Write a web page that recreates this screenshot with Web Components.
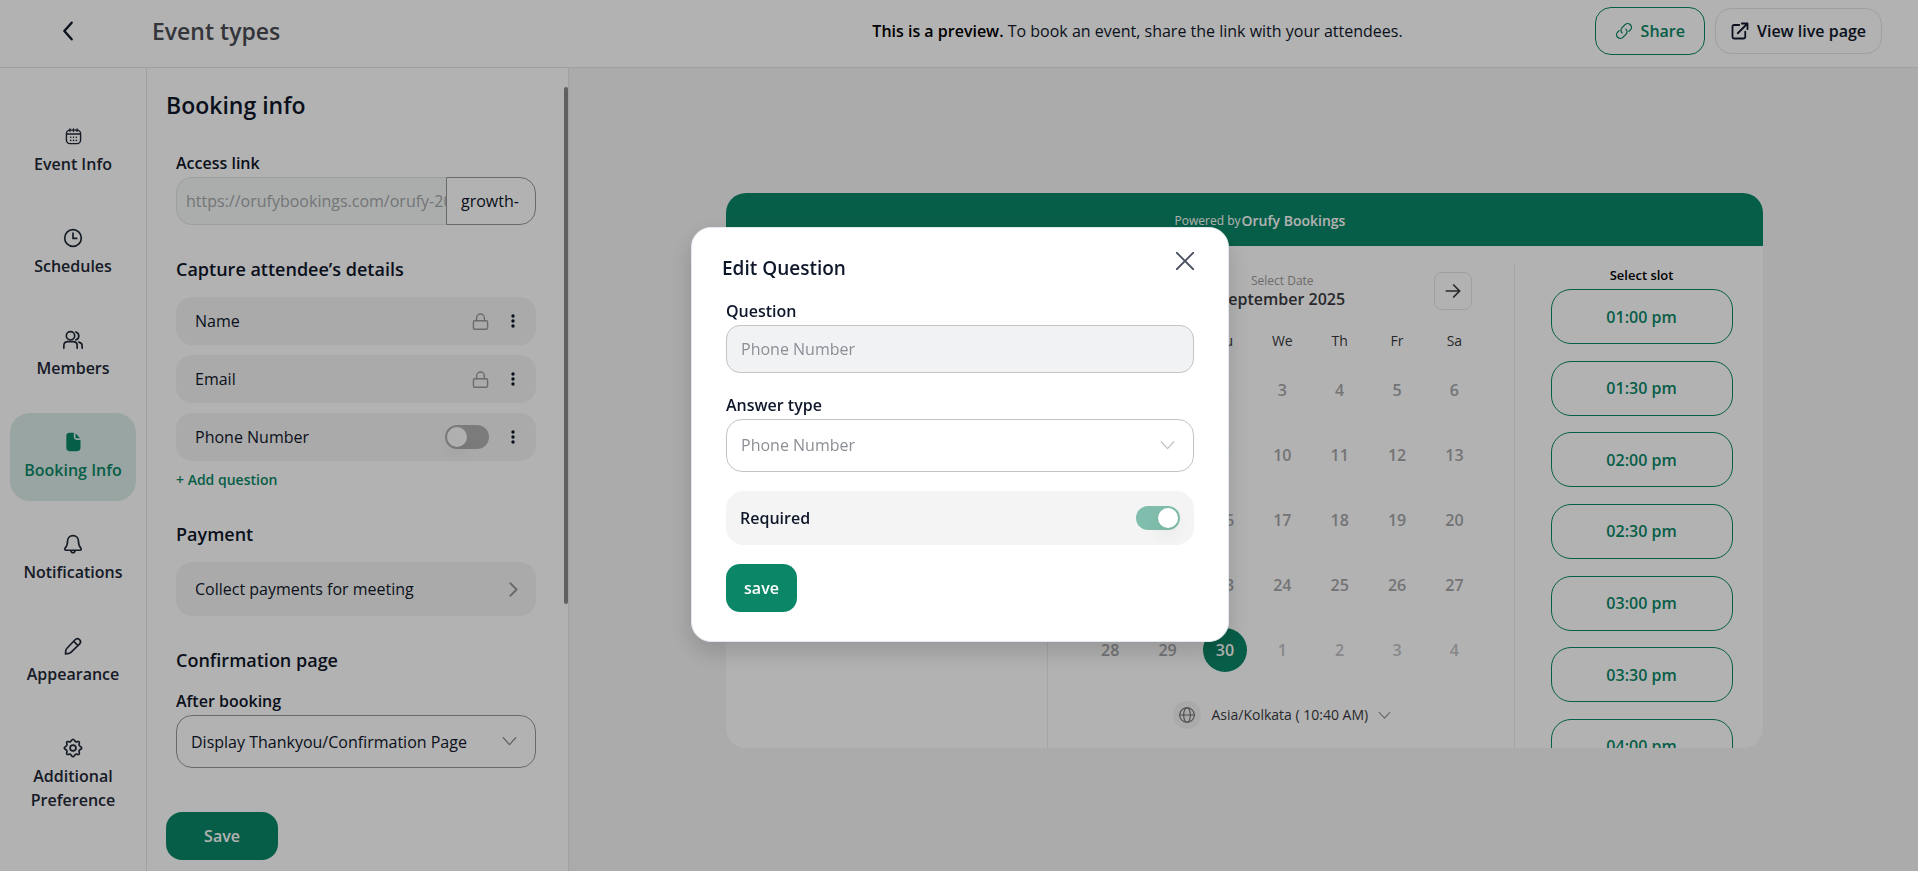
<!DOCTYPE html>
<html lang="en">
<head>
<meta charset="utf-8">
<title>Event types</title>
<style>
    :root {
        --green: #0b8767;
        --ink: #0f172a;
        --line: #e3e5ec;
        --soft: #f4f4f4;
    }
    body {
        margin: 0;
        font: 16px/24px "Open Sans", "Noto Sans", sans-serif;
        color: var(--ink);
        background: #fff;
    }
</style>
</head>
<body>

<booking-app></booking-app>

<script>
// shared by every shadow root
const base = `
    * { box-sizing: border-box; }
    button, input, select { font: inherit; color: inherit; margin: 0; }
    button { padding: 0; border: 0; background: none; cursor: pointer; }
    h1, h2, h3, p { margin: 0; }
`;

const icons = {
    back: '<path d="M16 3 8 12l8 9" stroke-width="2.6"/>',
    calendar: '<rect x="2" y="3" width="20" height="19" rx="5"/><path d="M2.500 8.500h19M7 1.500v3M12 1.500v3M17 1.500v3"/><path d="M8 13h.1M12 13h.1M16 13h.1M8 17.500h.1M12 17.500h.1M16 17.500h.1" stroke-width="2.2"/>',
    clock: '<circle cx="12" cy="12" r="10"/><path d="M12 6v6.500h4.500"/>',
    members: '<circle cx="9" cy="7" r="5"/><path d="M1 22v-3c0-3 2-5 5-5h6c3 0 5 2 5 5v3M15.500 2.300a5 5 0 0 1 0 9.500M19 14.500c2.500.6 4 2.300 4 4.500v3"/>',
    file: '<path d="M8 1h5v5c0 2 1.500 3.500 3.500 3.500H21V19a4 4 0 0 1-4 4H8a4 4 0 0 1-4-4V5a4 4 0 0 1 4-4z" fill="currentColor" stroke="none"/><path d="M15 1.500V6c0 1 .5 1.500 1.500 1.500H20.500z" fill="currentColor" stroke="none"/>',
    bell: '<path d="M12 2c-4 0-6.500 3-6.500 6.500 0 5-1.500 7-3 8.500-.8 1-.3 2.500 1 2.500h17c1.300 0 1.800-1.500 1-2.500-1.500-1.500-3-3.500-3-8.500C18.500 5 16 2 12 2zM9.500 20c.2 1.500 1 2.500 2.500 2.500s2.300-1 2.500-2.500"/>',
    pencil: '<path d="m14.500 4.500-10 10.500c-1 1-1.500 3-1.500 6.500 3.500 0 5.300-.6 6.500-1.800L20 9.500a3.600 3.600 0 0 0-5.500-5zM13 6.500l5 5"/>',
    gear: '<circle cx="12" cy="12" r="3.500"/><path d="M12 1.500c1.500 0 2 2.500 3.200 3 1.300.5 3.300-1 4.200 0s-.5 3-.1 4.200c.5 1.300 3.200 1.800 3.200 3.300s-2.700 2-3.200 3.300c-.4 1.200 1 3.200.1 4.200s-2.900-.5-4.200 0c-1.200.5-1.700 3-3.200 3s-2-2.500-3.200-3c-1.300-.5-3.300 1-4.200 0s.5-3 .1-4.200C4.200 14 1.500 13.500 1.500 12s2.700-2 3.200-3.300c.4-1.200-1-3.200-.1-4.200s2.900.5 4.200 0c1.200-.5 1.700-3 3.200-3z"/>',
    link: '<path d="M9.500 14.500a5 5 0 0 1 0-7l4-4a4.950 4.950 0 0 1 7 7l-2 2M14.500 9.500a5 5 0 0 1 0 7l-4 4a4.950 4.950 0 0 1-7-7l2-2"/>',
    external: '<path d="M11 4H4a2 2 0 0 0-2 2v14a2 2 0 0 0 2 2h13a2 2 0 0 0 2-2v-7M9 15 22 2M14.500 2H22v7.500" stroke-width="2.400"/>',
    lock: '<rect x="2" y="11" width="20" height="12" rx="2"/><path d="M6.500 11V7a5.500 5.500 0 0 1 11 0v4"/>',
    dots: '<g fill="currentColor" stroke="none"><circle cx="12" cy="3.500" r="2.900"/><circle cx="12" cy="12" r="2.900"/><circle cx="12" cy="20.500" r="2.900"/></g>',
    right: '<path d="m7 2 10 10L7 22"/>',
    down: '<path d="m2 6 10 11L22 6"/>',
    arrow: '<path d="M2 12h19M13 3l9 9-9 9"/>',
    close: '<path d="m1 1 22 22M23 1 1 23"/>',
    globe: '<circle cx="12" cy="12" r="11"/><ellipse cx="12" cy="12" rx="5" ry="11"/><path d="M1 12h22"/>'
};

class AppIcon extends HTMLElement {
    connectedCallback() {
        const size = this.getAttribute('size') || 18;
        const weight = this.getAttribute('weight') || 2;
        this.attachShadow({ mode: 'open' }).innerHTML = `
            <style>
                :host { display: inline-flex; flex: none; }
                svg { display: block; }
            </style>
            <svg width="${size}" height="${size}" viewBox="0 0 24 24" fill="none" stroke="currentColor"
                stroke-width="${weight}" stroke-linecap="round" stroke-linejoin="round" aria-hidden="true">
                ${icons[this.getAttribute('name')]}
            </svg>
        `;
    }
}
customElements.define('app-icon', AppIcon);


class AppHeader extends HTMLElement {
    constructor() {
        super();
        this.attachShadow({ mode: 'open' }).innerHTML = `
            <style>
                ${base}
                :host {
                    display: flex;
                    align-items: center;
                    padding: 7px 36px 12px 0;
                    border-bottom: 1px solid var(--line);
                }
                .back { width: 136px; height: 40px; display: flex; align-items: center; justify-content: center; }
                h1 { margin-left: 16px; font-size: 23px; line-height: 32px; font-weight: 600; color: #4b4d55; }
                p { margin: 0 192px 0 auto; }
                b { font-weight: 600; color: #000; }
                .share, a {
                    display: flex;
                    align-items: center;
                    gap: 8px;
                    border-radius: 16px;
                    font-weight: 600;
                    color: var(--ink);
                    text-decoration: none;
                }
                .share { height: 48px; padding: 0 19px; border: 1px solid var(--green); color: var(--green); }
                a { height: 46px; margin-left: 10px; padding: 0 15px; border: 1px solid var(--line); }
            </style>
            <button class="back" aria-label="Back"><app-icon name="back" size="22"></app-icon></button>
            <h1>Event types</h1>
            <p><b>This is a preview.</b> To book an event, share the link with your attendees.</p>
            <button class="share"><app-icon name="link" weight="1.8"></app-icon>Share</button>
            <a href="#"><app-icon name="external"></app-icon>View live page</a>
        `;
    }
}
customElements.define('app-header', AppHeader);


class NavItem extends HTMLElement {
    connectedCallback() {
        this.attachShadow({ mode: 'open' }).innerHTML = `
            <style>
                ${base}
                :host { display: block; }
                a {
                    display: flex;
                    flex-direction: column;
                    align-items: center;
                    gap: 6px;
                    padding: 19px 4px;
                    border-radius: 20px;
                    font-weight: 600;
                    color: #1f2937;
                    text-align: center;
                    text-decoration: none;
                }
                :host([active]) a { background: #dcede9; color: var(--green); }
                span { height: 20px; display: flex; align-items: center; }
            </style>
            <a href="#">
                <span><app-icon name="${this.getAttribute('icon')}" size="${this.getAttribute('size') || 20}"></app-icon></span>
                <slot></slot>
            </a>
        `;
    }
}
customElements.define('nav-item', NavItem);


class SideNav extends HTMLElement {
    constructor() {
        super();
        this.attachShadow({ mode: 'open' }).innerHTML = `
            <style>
                ${base}
                :host { display: block; flex: none; width: 147px; border-right: 1px solid var(--line); }
                nav { display: flex; flex-direction: column; gap: 14px; padding: 39px 10px 0; }
            </style>
            <nav>
                <nav-item icon="calendar" size="17">Event Info</nav-item>
                <nav-item icon="clock">Schedules</nav-item>
                <nav-item icon="members">Members</nav-item>
                <nav-item icon="file" active>Booking Info</nav-item>
                <nav-item icon="bell">Notifications</nav-item>
                <nav-item icon="pencil">Appearance</nav-item>
                <nav-item icon="gear">Additional Preference</nav-item>
            </nav>
        `;
    }
}
customElements.define('side-nav', SideNav);


class ToggleSwitch extends HTMLElement {
    connectedCallback() {
        const checked = this.hasAttribute('checked') ? 'checked' : '';
        this.attachShadow({ mode: 'open' }).innerHTML = `
            <style>
                ${base}
                :host { display: flex; flex: none; }
                input {
                    appearance: none;
                    display: flex;
                    align-items: center;
                    width: 44px;
                    height: 24px;
                    padding: 2px;
                    border-radius: 12px;
                    background: #b1b1b1;
                }
                input::before {
                    content: "";
                    width: 20px;
                    height: 20px;
                    border-radius: 50%;
                    background: #fcfcfc;
                    box-shadow: 0 8px 16px rgba(0, 0, 0, .06);
                }
                input:checked { justify-content: flex-end; background: #80bdac; }
                input:checked::before { background: #fff; }
            </style>
            <input type="checkbox" role="switch" aria-label="${this.getAttribute('label')}" ${checked}>
        `;
    }
}
customElements.define('toggle-switch', ToggleSwitch);


class QuestionRow extends HTMLElement {
    connectedCallback() {
        this.attachShadow({ mode: 'open' }).innerHTML = `
            <style>
                ${base}
                :host {
                    display: flex;
                    align-items: center;
                    gap: 16px;
                    height: 48px;
                    padding: 0 15px 0 19px;
                    border-radius: 16px;
                    background: var(--soft);
                }
                .name { flex: 1; }
                ::slotted(app-icon) { color: #9b9b9b; }
                button { width: 16px; height: 24px; display: flex; align-items: center; justify-content: center; }
            </style>
            <span class="name">${this.getAttribute('name')}</span>
            <slot></slot>
            <button aria-label="Options"><app-icon name="dots" size="14"></app-icon></button>
        `;
    }
}
customElements.define('question-row', QuestionRow);


class SelectField extends HTMLElement {
    connectedCallback() {
        this.attachShadow({ mode: 'open' }).innerHTML = `
            <style>
                ${base}
                :host { display: block; }
                label { display: block; margin-bottom: 1px; line-height: 26px; font-weight: 600; }
                .box { display: grid; align-items: center; }
                select, app-icon { grid-area: 1 / 1; }
                select {
                    appearance: none;
                    width: 100%;
                    height: 53px;
                    padding: 0 48px 0 14px;
                    border: 1px solid #999;
                    border-radius: 16px;
                    background: #fff;
                    opacity: 1;
                }
                app-icon { justify-self: end; margin-right: 19px; color: #8c8c8c; pointer-events: none; }
                select:disabled { border-color: #c4c4c4; color: #8b8e95; }
                select:disabled + app-icon { color: #c0c0c0; }
            </style>
            <label for="field">${this.getAttribute('label')}</label>
            <div class="box">
                <select id="field" ${this.hasAttribute('disabled') ? 'disabled' : ''}>
                    <option>${this.getAttribute('value')}</option>
                </select>
                <app-icon name="down" size="15"></app-icon>
            </div>
        `;
    }
}
customElements.define('select-field', SelectField);


class BookingPanel extends HTMLElement {
    constructor() {
        super();
        this.attachShadow({ mode: 'open' }).innerHTML = `
            <style>
                ${base}
                :host { display: flex; flex: none; width: 422px; border-right: 1px solid var(--line); }
                .content { flex: 1; display: flex; flex-direction: column; padding: 21px 13px 11px 19px; }
                h1 { margin-bottom: 29px; font-size: 23px; line-height: 32px; font-weight: 600; }
                .form { width: 360px; margin-left: 10px; }
                h2 { margin: 30px 0 14px; font-size: 18px; line-height: 28px; font-weight: 600; }
                label { display: block; margin-bottom: 1px; line-height: 26px; font-weight: 600; }
                .link { display: flex; }
                .link input { min-width: 0; height: 48px; border: 1px solid #999; background: #fff; }
                .link .base {
                    flex: 1;
                    padding: 0 0 0 9px;
                    border-color: var(--line);
                    border-right: 0;
                    border-radius: 16px 0 0 16px;
                    background: #f5f8f6;
                    color: #a5a8ad;
                }
                .link .slug { width: 90px; padding: 0 14px; border-radius: 0 16px 16px 0; }
                .rows { display: flex; flex-direction: column; gap: 10px; }
                .add { display: block; margin-top: 9px; font-size: 14px; line-height: 20px; font-weight: 600; color: var(--green); }
                .collect {
                    display: flex;
                    align-items: center;
                    justify-content: space-between;
                    width: 100%;
                    height: 54px;
                    padding: 0 15px 0 19px;
                    border-radius: 16px;
                    background: var(--soft);
                }
                .collect app-icon { color: #999; }
                .save {
                    align-self: flex-start;
                    width: 112px;
                    height: 48px;
                    margin-top: auto;
                    border-radius: 16px;
                    background: var(--green);
                    color: #fff;
                    font-weight: 600;
                }
                .rail { width: 4px; padding-top: 19px; }
                .thumb { height: 66%; border-radius: 2px; background: #8a8a8a; }
            </style>
            <div class="content">
                <h1>Booking info</h1>
                <div class="form">
                    <label for="slug">Access link</label>
                    <div class="link">
                        <input class="base" aria-label="Base address" value="https://orufybookings.com/orufy-2025" readonly>
                        <input class="slug" id="slug" value="growth-">
                    </div>
                    <h2>Capture attendee’s details</h2>
                    <div class="rows">
                        <question-row name="Name"><app-icon name="lock" size="17"></app-icon></question-row>
                        <question-row name="Email"><app-icon name="lock" size="17"></app-icon></question-row>
                        <question-row name="Phone Number"><toggle-switch label="Phone Number"></toggle-switch></question-row>
                    </div>
                    <button class="add">+ Add question</button>
                    <h2>Payment</h2>
                    <button class="collect">Collect payments for meeting <app-icon name="right" size="15" weight="3"></app-icon></button>
                    <h2>Confirmation page</h2>
                    <select-field label="After booking" value="Display Thankyou/Confirmation Page"></select-field>
                </div>
                <button class="save">Save</button>
            </div>
            <div class="rail"><div class="thumb"></div></div>
        `;
    }
}
customElements.define('booking-panel', BookingPanel);


class MonthCalendar extends HTMLElement {
    constructor() {
        super();
        this.attachShadow({ mode: 'open' }).innerHTML = `
            <style>
                ${base}
                :host { display: block; padding: 7px 31px 0 33px; }
                header { display: flex; align-items: center; justify-content: space-between; padding: 0 11px; text-align: center; }
                small { display: block; font-size: 12px; line-height: 16px; color: #9b9b9b; }
                h3 { font-size: 16px; line-height: 20px; font-weight: 600; color: #3a3a40; }
                header button {
                    width: 38px;
                    height: 38px;
                    display: flex;
                    align-items: center;
                    justify-content: center;
                    border: 1px solid var(--line);
                    border-radius: 8px;
                    color: #3a3a40;
                }
                .prev { transform: scaleX(-1); }
                table { width: 100%; margin-top: 14px; border-collapse: collapse; table-layout: fixed; text-align: center; }
                th, td { padding: 0; }
                th { height: 33px; font-size: 14px; line-height: 20px; font-weight: 400; color: #3a3a40; }
                td { height: 65px; font-weight: 600; color: #a6a7aa; }
                td.next { color: #c2c2c4; }
                td.today span {
                    display: grid;
                    place-items: center;
                    width: 44px;
                    height: 44px;
                    margin: 0 auto;
                    border-radius: 50%;
                    background: var(--green);
                    color: #fff;
                }
                .zone { display: flex; align-items: center; gap: 10px; margin: 19px auto 0; font-size: 14px; line-height: 20px; color: #3a3a40; }
                .globe { width: 28px; height: 28px; display: grid; place-items: center; border-radius: 50%; background: var(--soft); color: #6b6b70; }
                .zone > app-icon { color: #8c8c8c; }
            </style>
            <header>
                <button class="prev" aria-label="Previous month"><app-icon name="arrow" size="16" weight="2.6"></app-icon></button>
                <div>
                    <small>Select Date</small>
                    <h3>September 2025</h3>
                </div>
                <button aria-label="Next month"><app-icon name="arrow" size="16" weight="2.6"></app-icon></button>
            </header>
            <table>
                <thead><tr></tr></thead>
                <tbody></tbody>
            </table>
            <button class="zone">
                <span class="globe"><app-icon name="globe" size="16" weight="1.6"></app-icon></span>
                Asia/Kolkata ( 10:40 AM)
                <app-icon name="down" size="13"></app-icon>
            </button>
        `;
        this.render();
    }
    render() {
        const days = ['Su', 'Mo', 'Tu', 'We', 'Th', 'Fr', 'Sa'];
        this.shadowRoot.querySelector('thead tr').innerHTML = days.map(d => `<th>${d}</th>`).join('');

        let html = '';
        for (let week = 0; week < 5; week++) {
            html += '<tr>';
            for (let i = 0; i < 7; i++) {
                const n = week * 7 + i; // 1 September 2025 is a Monday
                if (n === 0) html += '<td></td>';
                else if (n === 30) html += '<td class="today"><span>30</span></td>';
                else if (n > 30) html += `<td class="next">${n - 30}</td>`;
                else html += `<td>${n}</td>`;
            }
            html += '</tr>';
        }
        this.shadowRoot.querySelector('tbody').innerHTML = html;
    }
}
customElements.define('month-calendar', MonthCalendar);


class SlotList extends HTMLElement {
    constructor() {
        super();
        const slots = ['01:00 pm', '01:30 pm', '02:00 pm', '02:30 pm', '03:00 pm', '03:30 pm', '04:00 pm'];
        this.attachShadow({ mode: 'open' }).innerHTML = `
            <style>
                ${base}
                :host { display: flex; flex-direction: column; align-items: center; padding-left: 5px; }
                h3 { margin-bottom: 4px; font-size: 13px; line-height: 20px; font-weight: 600; color: #000; }
                div { display: flex; flex-direction: column; justify-content: space-between; height: 485px; }
                button {
                    width: 182px;
                    height: 55px;
                    border: 1px solid var(--green);
                    border-radius: 20px;
                    font-weight: 600;
                    color: var(--green);
                }
            </style>
            <h3>Select slot</h3>
            <div>${slots.map(s => `<button>${s}</button>`).join('')}</div>
        `;
    }
}
customElements.define('slot-list', SlotList);


class BookingPreview extends HTMLElement {
    constructor() {
        super();
        this.attachShadow({ mode: 'open' }).innerHTML = `
            <style>
                ${base}
                :host { display: flex; flex: 1; align-items: center; padding: 2px 155px 0 157px; background: #f5f5f5; }
                .card { flex: 1; max-height: 555px; overflow: hidden; border-radius: 20px; background: #fff; }
                .brand {
                    display: flex;
                    align-items: center;
                    justify-content: center;
                    gap: 1px;
                    height: 53px;
                    padding: 2px 0 0 31px;
                    background: var(--green);
                    color: #fff;
                    font-size: 12px;
                }
                .brand b { font-size: 14px; font-weight: 600; }
                .columns { display: grid; grid-template-columns: 31fr 45fr 24fr; padding-top: 19px; }
                .columns > * + * { border-left: 1px solid #ececec; }
            </style>
            <div class="card">
                <div class="brand"><span>Powered by</span><b>Orufy Bookings</b></div>
                <div class="columns">
                    <div></div>
                    <month-calendar></month-calendar>
                    <slot-list></slot-list>
                </div>
            </div>
        `;
    }
}
customElements.define('booking-preview', BookingPreview);


class EditQuestion extends HTMLElement {
    constructor() {
        super();
        this.attachShadow({ mode: 'open' }).innerHTML = `
            <style>
                ${base}
                :host {
                    position: fixed;
                    inset: 0;
                    display: grid;
                    place-items: center;
                    padding: 0 0 3px 2px;
                    box-sizing: border-box;
                    background: rgba(0, 0, 0, .3);
                }
                section {
                    width: 538px;
                    padding: 24px 34px 29px 30px;
                    border: 1px solid #e2e8f0;
                    border-radius: 20px;
                    background: #fff;
                    box-shadow: 0 10px 24px rgba(0, 0, 0, .16);
                }
                header { display: flex; justify-content: space-between; margin-bottom: 14px; }
                h2 { font-size: 19px; line-height: 32px; font-weight: 600; }
                .close { align-self: flex-start; display: flex; color: #4b5262; }
                .body { display: flex; flex-direction: column; align-items: stretch; gap: 19px; margin-left: 4px; }
                label { display: block; margin-bottom: 1px; line-height: 26px; font-weight: 600; }
                #question {
                    display: block;
                    width: 100%;
                    height: 48px;
                    padding: 0 14px;
                    border: 1px solid #c4c4c4;
                    border-radius: 14px;
                    background: #f1f2f4;
                    color: #8b8e95;
                }
                .required {
                    display: flex;
                    align-items: center;
                    justify-content: space-between;
                    height: 54px;
                    padding: 0 14px;
                    border-radius: 18px;
                    background: #f4f4f4;
                    font-weight: 600;
                }
                .save {
                    align-self: flex-start;
                    width: 71px;
                    height: 48px;
                    border-radius: 14px;
                    background: var(--green);
                    color: #fff;
                    font-weight: 600;
                }
            </style>
            <section role="dialog" aria-modal="true" aria-labelledby="title">
                <header>
                    <h2 id="title">Edit Question</h2>
                    <button class="close" aria-label="Close"><app-icon name="close" size="18" weight="2.4"></app-icon></button>
                </header>
                <div class="body">
                    <div>
                        <label for="question">Question</label>
                        <input id="question" value="Phone Number" disabled>
                    </div>
                    <select-field label="Answer type" value="Phone Number" disabled></select-field>
                    <div class="required">Required <toggle-switch label="Required" checked></toggle-switch></div>
                    <button class="save">save</button>
                </div>
            </section>
        `;
    }
}
customElements.define('edit-question', EditQuestion);


class BookingApp extends HTMLElement {
    constructor() {
        super();
        this.attachShadow({ mode: 'open' }).innerHTML = `
            <style>
                ${base}
                :host { display: flex; flex-direction: column; min-height: 100vh; }
                main { flex: 1; display: flex; }
            </style>
            <app-header></app-header>
            <main>
                <side-nav></side-nav>
                <booking-panel></booking-panel>
                <booking-preview></booking-preview>
            </main>
            <edit-question></edit-question>
        `;
    }
}
customElements.define('booking-app', BookingApp);
</script>
</body>
</html>
